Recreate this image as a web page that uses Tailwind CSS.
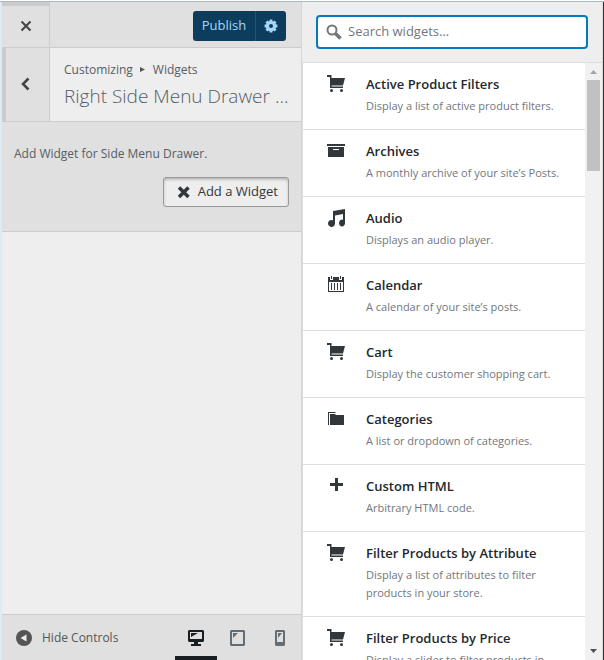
<!DOCTYPE html>
<html lang="en">
<head>
    <meta charset="UTF-8">
    <meta name="viewport" content="width=device-width, initial-scale=1.0">
    <title>Customize: Widgets</title>
    <script src="https://cdn.jsdelivr.net/npm/@tailwindcss/browser@4"></script>
</head>
<body class="h-screen overflow-hidden bg-[#eee] font-['Open_Sans','Noto_Sans',sans-serif] text-[13px] text-[#555d66]">
    <svg class="hidden">
        <symbol id="cart" viewBox="0 0 20 20">
            <path d="M1 1h4.500v3H19l-2 7.500H5.500v1H17V14H4V3H1z"/>
            <circle cx="5.500" cy="16.500" r="1.500"/>
            <circle cx="15.500" cy="16.500" r="1.500"/>
        </symbol>
    </svg>
    <div class="flex h-full flex-col border-t border-white">
        <div class="flex min-h-0 flex-1 border-t border-[#a9b7c0]">

            <!-- Controls sidebar -->
            <div class="flex w-1/2 flex-col border-l-2 border-r border-l-[#dfeaf4] border-r-[#d5d5d5]">
                <header class="flex h-[46px] border-b border-[#ccc] bg-[#e0e0e0]">
                    <button aria-label="Close" class="flex h-full w-12 items-center justify-center border-t-4 border-r border-[#ccc]">
                        <svg class="size-5" viewBox="0 0 20 20" fill="none" stroke="#444" stroke-width="2"><path d="M5.500 4.500l9 9M14.500 4.500l-9 9"/></svg>
                    </button>
                    <div class="mt-[9px] mr-[15px] ml-auto flex h-[30px] overflow-hidden rounded-[3px] bg-[#0c3d5d] text-[#a5d8f8]">
                        <button class="w-[63px] border-r border-[#1b5578]">Publish</button>
                        <button aria-label="Publish settings" class="flex w-[30px] items-center justify-center">
                            <svg class="size-4" viewBox="0 0 20 20" fill="none" stroke="currentColor">
                                <circle cx="10" cy="10" r="4.500" stroke-width="4"/>
                                <path stroke-width="3.500" d="M10 2v3M10 15v3M2 10h3M15 10h3M4.300 4.300l2 2M13.700 13.700l2 2M15.700 4.300l-2 2M6.300 13.700l-2 2"/>
                            </svg>
                        </button>
                    </div>
                </header>
                <div class="flex h-[74px] border-b border-[#ccc]">
                    <button aria-label="Back" class="flex w-12 shrink-0 items-center justify-center border-r border-l-4 border-[#ccc] bg-[#e0e0e0]">
                        <svg class="mr-1 size-5" viewBox="0 0 20 20" fill="none" stroke="#444" stroke-width="2.500"><path d="M12.500 3.500L7 9l5.500 5.500"/></svg>
                    </button>
                    <div class="min-w-0 flex-1 pt-3 pr-3 pl-3.5">
                        <p class="flex items-center text-xs leading-5">Customizing
                            <svg class="mx-1.5 size-2" viewBox="0 0 8 8" fill="#555"><path d="M1 1l5 2.500L1 6z"/></svg>
                            Widgets</p>
                        <h1 class="truncate text-[19px] leading-8 font-light">Right Side Menu Drawer ...</h1>
                    </div>
                </div>
                <section class="flex h-[110px] flex-col items-end border-b border-[#ccc] bg-[#e0e0e0] px-3 pt-[22px]">
                    <p class="w-full text-xs leading-5">Add Widget for Side Menu Drawer.</p>
                    <button class="mt-[13px] flex h-[30px] items-center gap-1 rounded-[3px] border border-[#999] bg-[#eee] px-2.5 text-[#32373c] shadow-[inset_0_2px_4px_-2px_rgba(0,0,0,0.5)]">
                        <svg class="size-5" viewBox="0 0 20 20" fill="none" stroke="currentColor" stroke-width="3.500"><path d="M5 5.500l9.500 9.500M14.500 5.500L5 15"/></svg>
                        Add a Widget
                    </button>
                </section>
                <footer class="mt-auto flex h-[46px] border-t border-[#ccc] bg-[#e0e0e0] text-[#656d74]">
                    <button class="flex items-center gap-2.5 pl-3.5 text-xs text-[#555]">
                        <svg class="size-4" viewBox="0 0 16 16"><circle cx="8" cy="8" r="8" fill="#555"/><path fill="#eee" d="M10.500 4.500v7L4.500 8z"/></svg>
                        Hide Controls
                    </button>
                    <div class="ml-auto flex">
                        <button aria-label="Desktop preview" class="flex w-[42px] items-center justify-center border-b-4 border-[#191e23] pt-1 text-[#191e23]">
                            <svg class="size-5" viewBox="0 0 20 20" fill="currentColor" fill-rule="evenodd"><path d="M3 2h14l1 1v10l-1 1h-5v2h3v2H5v-2h3v-2H3l-1-1V3zM4 4v7h12V4zM5 5h7L5 9z"/></svg>
                        </button>
                        <button aria-label="Tablet preview" class="flex w-[42px] items-center justify-center">
                            <svg class="size-5" viewBox="0 0 20 20" fill="currentColor" fill-rule="evenodd"><path d="M3 2h13l1 1v14l-1 1H3l-1-1V3zM4 4v12h11V4zM5 5h5L5 10z"/></svg>
                        </button>
                        <button aria-label="Mobile preview" class="flex w-[42px] items-center justify-center">
                            <svg class="size-5" viewBox="0 0 20 20" fill="currentColor" fill-rule="evenodd"><path d="M6 2h8l1 1v14l-1 1H6l-1-1V3zM7 4v10h6V4zM8 5h4l-4 5z"/></svg>
                        </button>
                    </div>
                </footer>
            </div>

            <!-- Available widgets -->
            <div class="flex min-w-0 flex-1 flex-col border-r border-[#2a323a] bg-[#ddd] pr-px">
                <div class="border-b border-[#ddd] bg-[#eee] px-3.5 py-[13px]">
                    <label class="flex h-[34px] items-center gap-1 rounded-[4px] border-2 border-[#007cba] bg-white px-1.5">
                        <svg class="size-5 shrink-0" viewBox="0 0 20 20" fill="none" stroke="#72777c"><circle cx="8" cy="8" r="4.500" stroke-width="2"/><path stroke-width="3.500" d="M11.500 11.500l5 5"/></svg>
                        <input type="search" aria-label="Search widgets" placeholder="Search widgets…" class="min-w-0 flex-1 text-[13px] outline-none placeholder:text-[#72777c]">
                    </label>
                </div>
                <div class="flex min-h-0 flex-1">
                    <ul class="min-w-0 flex-1 overflow-hidden border-l border-[#ddd] bg-white text-[11px] leading-[18px] text-[#72777c] [&_h3]:mb-1 [&_h3]:text-[13px] [&_h3]:leading-[18px] [&_h3]:font-semibold [&_h3]:text-[#23282d] [&_li]:flex [&_li]:gap-5 [&_li]:border-b [&_li]:border-[#ddd] [&_li]:pt-3 [&_li]:pr-4 [&_li]:pb-3.5 [&_li]:pl-[23px] [&_svg]:-mt-px [&_svg]:size-5 [&_svg]:shrink-0 [&_svg]:fill-[#32373c]">
                        <li>
                            <svg><use href="#cart"/></svg>
                            <div><h3>Active Product Filters</h3><p>Display a list of active product filters.</p></div>
                        </li>
                        <li>
                            <svg viewBox="0 0 20 20"><path fill-rule="evenodd" d="M1 3h18v2H1zM2 6h16v10H2zM7 8v1h6V8z"/></svg>
                            <div><h3>Archives</h3><p>A monthly archive of your site’s Posts.</p></div>
                        </li>
                        <li>
                            <svg viewBox="0 0 20 20"><path d="M7 3l12-2v13.500a3 3.500 0 1 1-2-2.800V6L9 7.500V15.500a3.500 3.500 0 1 1-2-3.200z"/></svg>
                            <div><h3>Audio</h3><p>Displays an audio player.</p></div>
                        </li>
                        <li>
                            <svg viewBox="0 0 20 20"><path fill-rule="evenodd" d="M2 2h2v3h3V2h6v3h3V2h2v15H2zM3 7v9h14V7zM5 8h1v7H5zM8 8h1v7H8zM11 8h1v7h-1zM14 8h1v7h-1zM5 1h1v3H5zM14 1h1v3h-1z"/></svg>
                            <div><h3>Calendar</h3><p>A calendar of your site’s posts.</p></div>
                        </li>
                        <li>
                            <svg><use href="#cart"/></svg>
                            <div><h3>Cart</h3><p>Display the customer shopping cart.</p></div>
                        </li>
                        <li>
                            <svg viewBox="0 0 20 20"><path d="M2 3h7l1 1H3v12H2zM4 5h5l1 1h8v10H4z"/></svg>
                            <div><h3>Categories</h3><p>A list or dropdown of categories.</p></div>
                        </li>
                        <li>
                            <svg viewBox="0 0 20 20"><path d="M9 2h3v5h5v3h-5v5H9v-5H4V7h5z"/></svg>
                            <div><h3>Custom HTML</h3><p>Arbitrary HTML code.</p></div>
                        </li>
                        <li>
                            <svg><use href="#cart"/></svg>
                            <div><h3>Filter Products by Attribute</h3><p>Display a list of attributes to filter products in your store.</p></div>
                        </li>
                        <li>
                            <svg><use href="#cart"/></svg>
                            <div><h3>Filter Products by Price</h3><p>Display a slider to filter products in your store by price.</p></div>
                        </li>
                    </ul>
                    <div class="flex w-[17px] flex-col items-center bg-[#f1f1f1]">
                        <svg class="h-[17px] w-[17px] shrink-0" viewBox="0 0 17 17" fill="#a3a3a3"><path d="M5 11l3.500-4 3.500 4z"/></svg>
                        <div class="h-[91px] w-[13px] bg-[#c1c1c1]"></div>
                        <svg class="mt-auto h-[17px] w-[17px] shrink-0" viewBox="0 0 17 17" fill="#505050"><path d="M5 6l3.500 4L12 6z"/></svg>
                    </div>
                </div>
            </div>
        </div>
    </div>
</body>
</html>
